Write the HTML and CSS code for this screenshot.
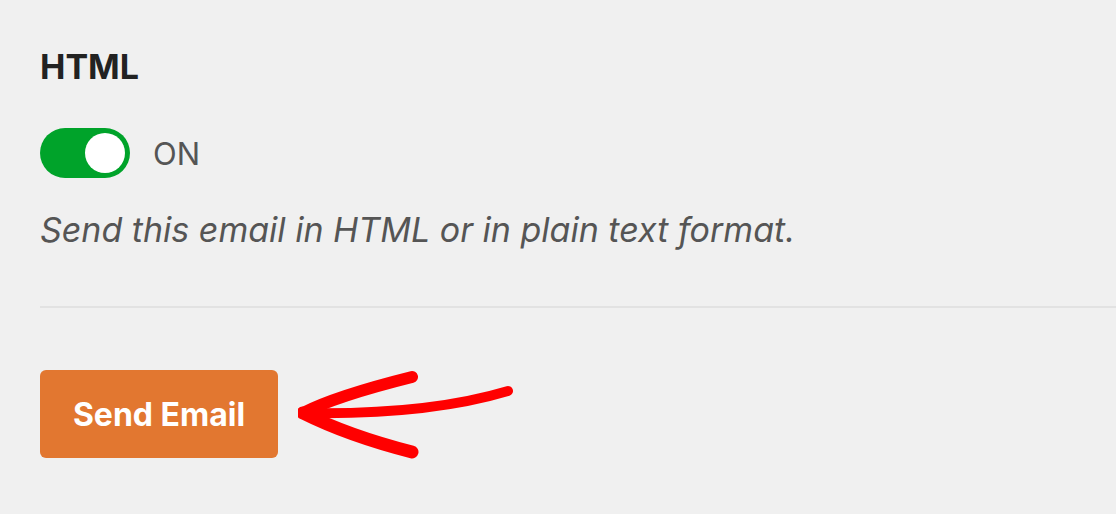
FILE: index.html
```html
<!DOCTYPE html>
<html>
<head>
<meta charset="utf-8">
<link rel="stylesheet" href="styles.css">
</head>
<body>
<div class="panel">
  <h2 class="title">HTML</h2>
  <div class="toggle-row">
    <span class="toggle"><span class="knob"></span></span>
    <span class="toggle-label">ON</span>
  </div>
  <p class="desc">Send this email in HTML or in plain text format.</p>
  <hr class="divider">
  <div class="actions">
    <button class="btn">Send Email</button>
    <svg class="arrow" width="230" height="100" viewBox="0 0 230 100">
      <g fill="none" stroke="#ff0000" stroke-linecap="round" stroke-linejoin="round">
        <path d="M5 43 C 30 30, 70 18, 114 7" stroke-width="12"/>
        <path d="M5 43 C 60 44, 140 42, 210 21" stroke-width="10"/>
        <path d="M5 43 C 35 58, 75 72, 114 82" stroke-width="13"/>
      </g>
    </svg>
  </div>
</div>
</body>
</html>
```
FILE: styles.css
```css
html, body {
  margin: 0;
  padding: 0;
  background: #f0f0f0;
}
body {
  font-family: Inter, "Noto Sans", sans-serif;
  width: 1116px;
  height: 514px;
  overflow: hidden;
}
.panel {
  padding: 47px 0 0 40px;
}
.title {
  margin: 0;
  font-size: 34px;
  font-weight: 700;
  color: #222;
  line-height: 40px;
}
.toggle-row {
  display: flex;
  align-items: center;
  gap: 23px;
  margin-top: 41px;
}
.toggle {
  width: 90px;
  height: 50px;
  border-radius: 25px;
  background: #00a32a;
  display: flex;
  align-items: center;
  justify-content: flex-end;
  padding: 0 5px;
  box-sizing: border-box;
}
.knob {
  width: 40px;
  height: 40px;
  border-radius: 50%;
  background: #fff;
}
.toggle-label {
  font-size: 31px;
  color: #555;
}
.desc {
  margin: 28px 0 0;
  font-size: 34px;
  font-style: italic;
  color: #555;
  line-height: 48px;
}
.divider {
  border: 0;
  height: 2px;
  background: #e2e2e2;
  margin: 52px 0 0;
}
.actions {
  display: flex;
  align-items: flex-start;
  margin-top: 62px;
}
.btn {
  width: 238px;
  height: 88px;
  border: 0;
  border-radius: 6px;
  background: #e27730;
  color: #fff;
  font-family: Inter, "Noto Sans", sans-serif;
  font-size: 32px;
  font-weight: 700;
  padding: 0;
}
.arrow {
  margin-left: 20px;
}
```
